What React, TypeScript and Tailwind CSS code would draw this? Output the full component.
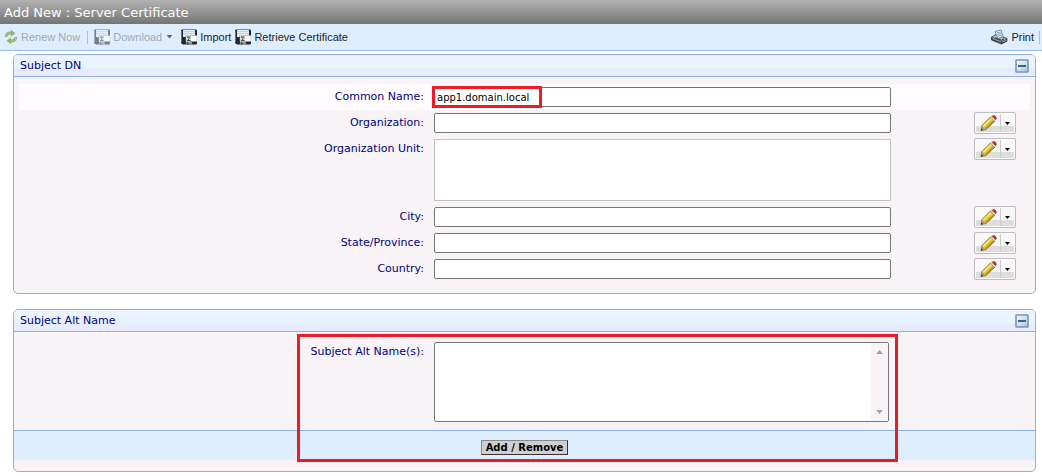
import React, { useState, type ReactNode } from "react";

const toolButton =
  "flex items-center gap-[3px] font-['Liberation_Sans',Arial,sans-serif] text-[11px] leading-4 text-[#222222] disabled:text-[#a3a9b1]";

const rowGrid =
  "grid grid-cols-[minmax(0,405fr)_minmax(0,457fr)_minmax(0,129fr)] items-start gap-x-[10px]";

const fieldBox =
  "block w-full rounded-[2px] border border-[#767676] bg-white px-[2px] text-[10px] text-black outline-none";

function RenewIcon() {
  return (
    <svg width="14" height="16" viewBox="0 0 14 16" aria-hidden="true">
      <path d="M.8 8C.8 4.500 3 2.500 7 2.500V.8l4.500 3.400L7 7.600V5.500C5 5.500 3.800 6.300 3.500 8z" fill="#8db56c" />
      <path d="M13.200 8c0 3.500-2.200 5.500-6.200 5.500v1.700l-4.500-3.400L7 8.400v2.100c2 0 3.200-.8 3.500-2.500z" fill="#8db56c" />
      <path d="M2 7.500c.3-2.500 2.200-3.700 5-3.700M12 8.500c-.3 2.500-2.200 3.700-5 3.700" fill="none" stroke="#b4d396" strokeWidth=".8" />
    </svg>
  );
}

function DiskIcon({ muted = false }: { muted?: boolean }) {
  return (
    <svg width="16" height="16" viewBox="0 0 16 16" opacity={muted ? 0.55 : 1} aria-hidden="true">
      <path d="M0 1.500Q0 .5 1 .5h14q1 0 1 1V14q0 1.500-1 1.500H2L0 14z" fill="#23282c" />
      <rect x="2" y="1" width="12" height="7" fill="#e4eef1" />
      <path d="M2 2.500h12M2 4.500h12" stroke="#c3d3d8" />
      <path d="M5 13h6v2.500H5z" fill="#8e9699" />
      <path d="M6 13.500h1.500v2H6z" fill="#33383b" />
      <rect x="5" y="6.500" width="11" height="6" fill="#fff" stroke="#8b9194" strokeWidth=".6" />
      <rect x="5" y="6.500" width="5" height="6" fill="#d9dddf" />
      <path d="M6 8h3.500M6 11.500h3.500M6.800 8.200l1.500 1.500-1.500 1.500" stroke="#222" fill="none" strokeWidth=".8" />
      <path d="M.5 2v11" stroke="#6c7377" />
    </svg>
  );
}

function PrinterIcon() {
  return (
    <svg width="17" height="16" viewBox="0 0 17 16" aria-hidden="true">
      <path d="M.5 8L5 5.500l11 4v2.700L10.500 15 .5 11z" fill="#3f444a" stroke="#25282c" strokeWidth=".7" />
      <path d="M1 8L5 6l10.500 3.700L11 12z" fill="#b5babe" />
      <path d="M4 2.500L10 1l2.200 6.500L7 9.500z" fill="#eaf3fc" stroke="#53779b" strokeWidth=".8" />
      <path d="M6 4l3.500-1M6.500 5.500l4-1.200M7 7.200l4-1.200" stroke="#5f87b5" strokeWidth=".8" />
      <path d="M4 8.800l6.500 2.400 2.500-1.400" fill="none" stroke="#34383c" />
      <path d="M1.500 9.500l8.500 3.300" stroke="#bfc3c6" strokeWidth=".8" />
      <path d="M11.500 13l4-1.800" stroke="#a9adaf" />
    </svg>
  );
}

function PencilIcon() {
  return (
    <svg width="17" height="16" viewBox="0 0 17 16" aria-hidden="true">
      <path d="M1 15.500l1-5L10.500 2l4.300 4.200L6 14.500z" fill="#e3c637" stroke="#6f5b1c" strokeWidth=".8" />
      <path d="M3.300 11.300L11.300 3.500" stroke="#f9ea83" strokeWidth="1.600" />
      <path d="M5.500 13.500l8.300-7.800" stroke="#b08d1e" strokeWidth="1.200" />
      <path d="M1 15.500l1-4.500 3.500 3.300z" fill="#aaa08c" />
      <path d="M.8 15.800l.6-2.600 2 1.900z" fill="#444" />
      <path d="M10.500 2.500L12 1.200l3.600 3.600L14.300 6z" fill="#dfe5ea" stroke="#848c94" strokeWidth=".5" />
      <path d="M12 1.200Q13.200-.2 15 .8t1.300 3l-.8 1z" fill="#c5392b" stroke="#9b3027" strokeWidth=".5" />
    </svg>
  );
}

function EditButton({ label }: { label: string }) {
  return (
    <div className="mt-[2px] mr-[14px] flex h-[22px] w-[42px] justify-self-end rounded-[2px] border border-[#bdbdbd] bg-[#fafafa] p-px">
      <button type="button" aria-label={`Edit ${label}`} className="flex flex-1 items-center justify-center border-r border-[#cccccc] bg-[linear-gradient(#f8f8f8_65%,#dddddd_65%)]">
        <PencilIcon />
      </button>
      <button type="button" aria-label={`${label} options`} className="flex w-[13px] items-center justify-center bg-[linear-gradient(#f8f8f8_65%,#dddddd_65%)]">
        <svg width="5" height="3" viewBox="0 0 5 3" aria-hidden="true"><path d="M0 0h5L2.500 3z" fill="#000" /></svg>
      </button>
    </div>
  );
}

function Panel({ title, children }: { title: string; children: ReactNode }) {
  const [open, setOpen] = useState(true);
  return (
    <section className="overflow-hidden rounded-[5px] border border-[#8db2e3] bg-[#f7f3f7]">
      <header className="flex h-[22px] items-center justify-between border-b border-[#8db2e3] bg-[linear-gradient(#eff3ff_0%,#e7f3ff_60%,#e7ecfd_65%)] pr-[6px] pl-[6px]">
        <h2 className="pt-px text-[11px] leading-[18px] text-[#000080]">{title}</h2>
        <button type="button" aria-label={`Toggle ${title}`} aria-expanded={open} onClick={() => setOpen(!open)}>
          <svg width="14" height="14" viewBox="0 0 14 14" aria-hidden="true">
            <defs>
              <linearGradient id="toggleFill" x1="0" y1="0" x2="1" y2="1">
                <stop offset="0" stopColor="#f7fcff" />
                <stop offset="1" stopColor="#a3c5dd" />
              </linearGradient>
            </defs>
            <rect x="1" y="1" width="12" height="12" rx=".5" fill="url(#toggleFill)" stroke="#7897ae" strokeWidth="1.600" />
            <path d={open ? "M3 7h8" : "M3 7h8M7 3v8"} stroke="#3f637f" strokeWidth="2" />
          </svg>
        </button>
      </header>
      {open && children}
    </section>
  );
}

type Field = { id: string; label: string; value?: string; multiline?: boolean; highlighted?: boolean };

const fields: Field[] = [
  { id: "cn", label: "Common Name", value: "app1.domain.local", highlighted: true },
  { id: "org", label: "Organization" },
  { id: "ou", label: "Organization Unit", multiline: true },
  { id: "city", label: "City" },
  { id: "state", label: "State/Province" },
  { id: "country", label: "Country" },
];

function FieldRow({ field }: { field: Field }) {
  return (
    <div className={`${rowGrid} ${field.highlighted ? "bg-[#fffbff]" : ""}`}>
      <label htmlFor={field.id} className="pt-1 text-right text-[11px] leading-[18px] text-[#000080]">{field.label}:</label>
      <div className="relative py-[3px]">
        {field.multiline ? (
          <textarea id={field.id} className="block h-[62px] w-full resize-none border border-[#c0c0c0] bg-white outline-none" />
        ) : (
          <input id={field.id} type="text" defaultValue={field.value} className={`${fieldBox} h-5`} />
        )}
        {field.highlighted && (
          <span className="pointer-events-none absolute top-[2px] -left-[2px] h-[22px] w-[110px] border-3 border-[#ed1c24]" />
        )}
      </div>
      {!field.highlighted && <EditButton label={field.label} />}
    </div>
  );
}

export default function App() {
  return (
    <div className="min-h-screen bg-white font-['DejaVu_Sans',Verdana,sans-serif]">
      <header className="flex h-6 items-center bg-[linear-gradient(#b3b3b3,#747474)] px-1 pt-px">
        <h1 className="text-[13px] leading-[18px] text-white">Add New : Server Certificate</h1>
      </header>
      <nav aria-label="Actions" className="flex h-[27px] items-center border-b border-[#99bbe8] bg-[#deeeff] pl-1">
        <button type="button" disabled className={toolButton}><RenewIcon /> Renew Now</button>
        <span className="mr-[6px] ml-[7px] h-[13px] w-px bg-[#98c0f4]" />
        <button type="button" disabled className={toolButton}>
          <DiskIcon muted /> Download
          <svg className="mr-1 ml-px" width="7" height="4" viewBox="0 0 7 4" aria-hidden="true"><path d="M.5 0h6l-3 3.500z" fill="#666" /></svg>
        </button>
        <button type="button" className={`${toolButton} ml-1`}><DiskIcon /> Import</button>
        <button type="button" className={`${toolButton} ml-1`}><DiskIcon /> Retrieve Certificate</button>
        <button type="button" className={`${toolButton} ml-auto`}><PrinterIcon /> Print</button>
        <span className="mr-[2px] ml-[5px] h-[13px] w-px bg-[#98c0f4]" />
      </nav>
      <main className="flex flex-col gap-[15px] pt-[3px] pr-[6px] pb-1 pl-[13px]">
        <Panel title="Subject DN">
          <div className="px-[5px] pt-[7px] pb-[11px]">
            {fields.map((field) => <FieldRow key={field.id} field={field} />)}
          </div>
        </Panel>
        <Panel title="Subject Alt Name">
          <div className="relative pb-[11px]">
            <div className={`${rowGrid} px-[5px] pt-[10px] pb-2`}>
              <label htmlFor="san" className="pt-px text-right text-[11px] leading-[18px] text-[#000080]">Subject Alt Name(s):</label>
              <div className="relative pr-[2px]">
                <textarea id="san" className={`${fieldBox} h-20 resize-none`} />
                <div className="pointer-events-none absolute top-px right-[3px] bottom-px flex w-[17px] flex-col items-center justify-between bg-[#f7f3f7] py-[7px]">
                  <svg width="7" height="4" viewBox="0 0 7 4" aria-hidden="true"><path d="M0 4h7L3.500 0z" fill="#a3a0a3" /></svg>
                  <svg width="7" height="4" viewBox="0 0 7 4" aria-hidden="true"><path d="M0 0h7L3.500 4z" fill="#a3a0a3" /></svg>
                </div>
              </div>
            </div>
            <div className="flex h-[30px] items-center justify-center border-t border-[#8db2e3] bg-[#deeeff] pt-1">
              <button type="button" className="h-[15px] w-[87px] border border-t-[#888888] border-r-[#333333] border-b-[#333333] border-l-[#888888] bg-[#d0d0d0] text-[10px] leading-3 font-bold text-black">Add / Remove</button>
            </div>
            <div className="pointer-events-none absolute top-[2px] right-[137px] bottom-[9px] left-[283px] border-3 border-[#ed1c24]" />
          </div>
        </Panel>
      </main>
    </div>
  );
}
